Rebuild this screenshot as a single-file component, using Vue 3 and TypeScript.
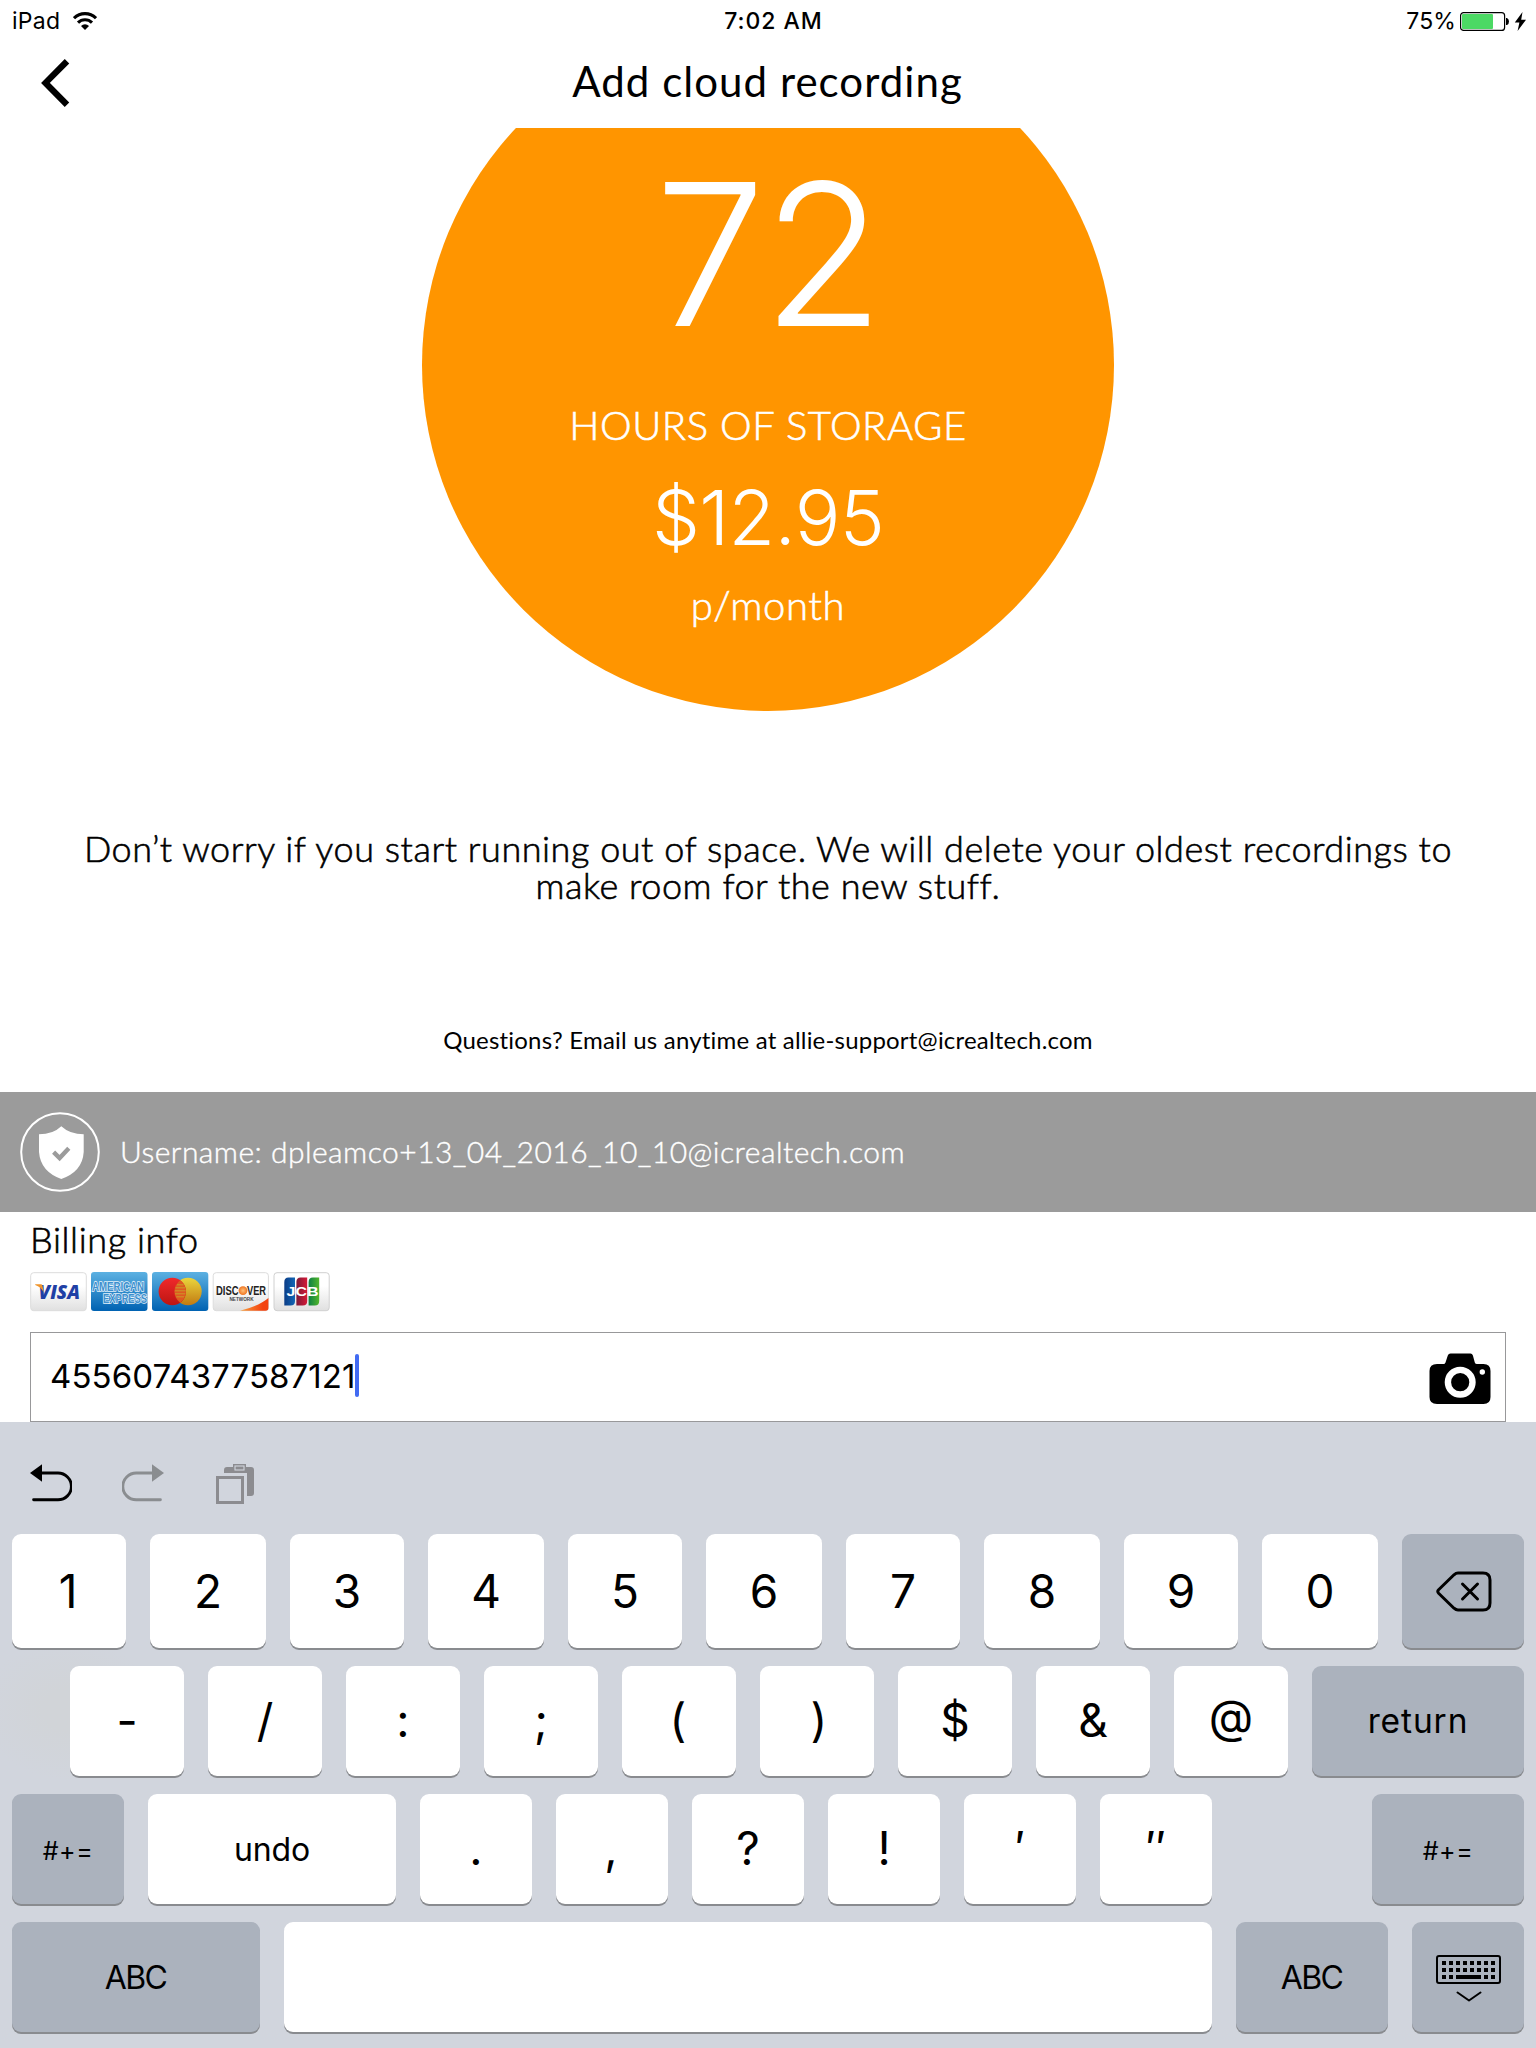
<script setup lang="ts">
interface Key {
  label: string
  kind?: 'dark' | 'space'
  size?: 'word' | 'small'
  icon?: 'delete' | 'dismiss'
  width: number
  nudge?: number
  lift?: number
  gapBefore?: number
}

const k = (label: string, width: number, extra: Partial<Key> = {}): Key => ({ label, width, ...extra })

const rows: { name: string; keys: Key[] }[] = [
  {
    name: 'digits',
    keys: [
      k('1', 114, { nudge: -1 }), k('2', 116), k('3', 114), k('4', 116), k('5', 114),
      k('6', 116), k('7', 114), k('8', 116), k('9', 114), k('0', 116),
      k('', 122, { kind: 'dark', icon: 'delete' }),
    ],
  },
  {
    name: 'symbols',
    keys: [
      k('-', 114), k('/', 114), k(':', 114), k(';', 114), k('(', 114, { nudge: -1 }),
      k(')', 114, { nudge: 2 }), k('$', 114), k('&', 114), k('@', 114, { lift: 4 }),
      k('return', 212, { kind: 'dark', size: 'word' }),
    ],
  },
  {
    name: 'marks',
    keys: [
      k('#+=', 112, { kind: 'dark', size: 'small' }), k('undo', 248, { size: 'word' }),
      k('.', 112), k(',', 112, { nudge: -1 }), k('?', 112), k('!', 112), k('′', 112), k('″', 112),
      k('#+=', 152, { kind: 'dark', size: 'small', gapBefore: 136 }),
    ],
  },
  {
    name: 'bottom',
    keys: [
      k('ABC', 248, { kind: 'dark', size: 'word' }), k('', 928, { kind: 'space' }),
      k('ABC', 152, { kind: 'dark', size: 'word' }), k('', 112, { kind: 'dark', icon: 'dismiss' }),
    ],
  },
]

const labelStyle = (key: Key) => ({
  marginLeft: key.nudge ? key.nudge * 2 + 'px' : undefined,
  marginBottom: key.lift ? key.lift * 2 + 'px' : undefined,
})

const dots: { x: number; y: number }[] = []
for (let r = 0; r < 3; r++) {
  for (let c = 0; c < 8; c++) {
    if (r === 2 && c > 1 && c < 6) continue
    dots.push({ x: 6 + c * 7, y: 6 + r * 7 })
  }
}
</script>

<template>
  <div class="screen">
    <div class="status">
      <div class="side left">
        <span class="device">iPad</span>
        <svg class="wifi" width="24" height="19" viewBox="0 0 24 19">
          <g fill="none" stroke="#000" stroke-width="3.1">
            <path d="M1 6.2 A15.6 15.6 0 0 1 23 6.2" />
            <path d="M5 10.6 A9.9 9.9 0 0 1 19 10.6" />
          </g>
          <path d="M12 18 L8 13.9 A5.8 5.8 0 0 1 16 13.9 Z" />
        </svg>
      </div>
      <div class="time">7:02 AM</div>
      <div class="side right">
        <span class="pct">75%</span>
        <svg width="67" height="19" viewBox="0 0 67 19">
          <rect x="0.6" y="0.6" width="44" height="17.8" rx="3" fill="none" stroke="#000" stroke-width="1.2" />
          <rect x="2" y="2" width="31" height="15" rx="1" fill="#4cd964" />
          <path d="M46 6 h1 q2 1 2 3.5 t-2 3.5 h-1 z" />
          <path d="M62.5 0 L54.8 10.6 H59.4 L57.6 19 L66 7.7 H61.2 Z" />
        </svg>
      </div>
    </div>

    <div class="nav">
      <svg class="back" width="30" height="50" viewBox="0 0 30 50">
        <path d="M27 3.2 L5.5 24.9 L27 46.7" fill="none" stroke="#000" stroke-width="6.3" />
      </svg>
      <div class="title">Add cloud recording</div>
      <div class="nav-end"></div>
    </div>

    <div class="plan">
      <div class="circle">
        <div class="hours">72</div>
        <div class="storage">HOURS OF STORAGE</div>
        <div class="price">$12.95</div>
        <div class="period">p/month</div>
      </div>
    </div>

    <div class="note">
      Don’t worry if you start running out of space. We will delete your oldest recordings to
      make room for the new stuff.
    </div>
    <div class="questions">Questions? Email us anytime at allie-support@icrealtech.com</div>

    <div class="user">
      <svg width="80" height="80" viewBox="0 0 80 80">
        <circle cx="40" cy="40" r="38.8" fill="none" stroke="#fff" stroke-width="2" />
        <path fill="#fff" d="M41.3 14.2 Q50 22.3 63.7 22.3 V40 Q62.5 59.5 41.3 67 Q20.5 59.5 19 40 V22.3 Q33 22.3 41.3 14.2 Z" />
        <path d="M33.6 40.2 L39.6 46 L48.8 36.2" fill="none" stroke="#9b9b9b" stroke-width="4.4" />
      </svg>
      <span>Username: dpleamco+13_04_2016_10_10@icrealtech.com</span>
    </div>

    <div class="billing">
      <div class="billing-title">Billing info</div>
      <svg class="cards" width="301" height="40" viewBox="0 0 301 40">
        <defs>
          <linearGradient id="pale" x1="0" y1="0" x2="0" y2="1">
            <stop offset="0.35" stop-color="#fff" /><stop offset="1" stop-color="#e0e0e0" />
          </linearGradient>
          <linearGradient id="azure" x1="0" y1="0" x2="0" y2="1">
            <stop offset="0" stop-color="#5cb1e2" /><stop offset="1" stop-color="#0062b2" />
          </linearGradient>
          <linearGradient id="red" x1="0" y1="0" x2="0" y2="1">
            <stop offset="0" stop-color="#f0292b" /><stop offset="1" stop-color="#bd1512" />
          </linearGradient>
          <linearGradient id="gold" x1="0" y1="0" x2="0" y2="1">
            <stop offset="0" stop-color="#ead53c" /><stop offset="1" stop-color="#c17a12" />
          </linearGradient>
          <linearGradient id="flame" x1="0" y1="0" x2="1" y2="0">
            <stop offset="0" stop-color="#f8a03c" /><stop offset="0.8" stop-color="#f3420f" />
          </linearGradient>
          <linearGradient id="jblue"><stop offset="0" stop-color="#0b3c86" /><stop offset="1" stop-color="#1266b5" /></linearGradient>
          <linearGradient id="jred"><stop offset="0" stop-color="#7c1a38" /><stop offset="1" stop-color="#d51a37" /></linearGradient>
          <linearGradient id="jgreen"><stop offset="0" stop-color="#0e8044" /><stop offset="1" stop-color="#52b62c" /></linearGradient>
          <radialGradient id="orb"><stop offset="0" stop-color="#ffc07a" /><stop offset="1" stop-color="#ef7420" /></radialGradient>
        </defs>

        <rect x="0.7" y="0.7" width="55.6" height="38" rx="3" fill="url(#pale)" stroke="#dcdcdc" />
        <text x="8.5" y="27" class="visa" textLength="41.5" lengthAdjust="spacingAndGlyphs">VISA</text>
        <path d="M5.2 12.2 H10.8 Q12 12.2 12.4 13.6 L13.8 20.5 Q11 14.8 5.2 12.9 Z" fill="#f0942a" />

        <rect x="61" y="0" width="56.5" height="39" rx="3" fill="url(#azure)" />
        <text x="62" y="18.8" class="amex" textLength="52" lengthAdjust="spacingAndGlyphs">AMERICAN</text>
        <text x="73" y="30.8" class="amex" textLength="44" lengthAdjust="spacingAndGlyphs">EXPRESS</text>

        <rect x="122" y="0" width="56.3" height="39" rx="3" fill="url(#azure)" />
        <circle cx="158" cy="19.5" r="13.7" fill="url(#gold)" />
        <circle cx="142.3" cy="19.5" r="13.7" fill="url(#red)" />
        <path d="M150.2 8.3 A13.7 13.7 0 0 1 150.2 30.7 A13.7 13.7 0 0 1 150.2 8.3 Z" fill="#de5a20" />
        <path d="M147 12.8 H153.5 M145.5 15.8 H155 M144.8 18.8 H155.6 M145 21.8 H155.4 M146.3 24.8 H154.2" stroke="#c9a02a" stroke-width="0.9" />

        <rect x="183.2" y="0.7" width="55.2" height="38" rx="3" fill="url(#pale)" stroke="#dcdcdc" />
        <path d="M210 38.7 Q229 34 238.4 26 V36 Q238.4 38.7 235.5 38.7 Z" fill="url(#flame)" />
        <circle cx="213" cy="18.6" r="4.4" fill="url(#orb)" />
        <text x="186" y="23" class="disc" textLength="22.6" lengthAdjust="spacingAndGlyphs">DISC</text>
        <text x="217" y="23" class="disc" textLength="19" lengthAdjust="spacingAndGlyphs">VER</text>
        <text x="199.5" y="28.6" class="net" textLength="24" lengthAdjust="spacingAndGlyphs">NETWORK</text>

        <rect x="244" y="0.7" width="55.2" height="38" rx="3" fill="url(#pale)" stroke="#d0d0d0" />
        <path d="M258.5 5.5 H265 V29 Q265 33.5 260.5 33.5 H254.3 V10 Q254.3 5.5 258.5 5.5 Z" fill="url(#jblue)" />
        <path d="M270.6 5.5 H277.2 V29 Q277.2 33.5 272.7 33.5 H266.4 V10 Q266.4 5.5 270.6 5.5 Z" fill="url(#jred)" />
        <path d="M282.8 5.5 H289.2 V29 Q289.2 33.5 284.8 33.5 H278.6 V10 Q278.6 5.5 282.8 5.5 Z" fill="url(#jgreen)" />
        <text x="256.5" y="24" class="jcb" textLength="32" lengthAdjust="spacingAndGlyphs">JCB</text>
      </svg>

      <div class="field">
        <span class="number">4556074377587121</span>
        <span class="caret"></span>
        <svg class="camera" width="62" height="52" viewBox="0 0 62 52">
          <path fill-rule="evenodd" d="M8 11 H14.5 Q16 11 16.5 9.5 L18.8 2.6 Q19.5 0.5 21.5 0.5 H41.5 Q43.3 0.5 43.9 2.6 L45.8 9.5 Q46.3 11 48 11 H54.5 Q61.5 11 61.5 18 V44 Q61.5 51 54.5 51 H8 Q0.5 51 0.5 44 V18 Q0.5 11 8 11 Z" />
          <circle cx="31.2" cy="29.2" r="12.3" fill="none" stroke="#fff" stroke-width="6.4" />
          <circle cx="53.3" cy="19" r="2.7" fill="#fff" />
        </svg>
      </div>
    </div>

    <div class="keyboard">
      <div class="tools">
        <svg width="42" height="38" viewBox="0 0 42 38">
          <path d="M10 9 H28 A13.4 13.4 0 0 1 28 35.8 H3.6" fill="none" stroke="#000" stroke-width="2.9" stroke-linecap="round" />
          <path d="M0 9 L12 0.3 V17.8 Z" />
        </svg>
        <svg width="42" height="38" viewBox="0 0 42 38">
          <path d="M32 9 H14.2 A13.4 13.4 0 0 0 14.2 35.8 H38.4" fill="none" stroke="#8a8d90" stroke-width="2.9" stroke-linecap="round" />
          <path d="M42 9 L30 0.3 V17.8 Z" fill="#8a8d90" />
        </svg>
        <svg class="paste" width="38" height="40" viewBox="0 0 38 40">
          <path d="M8 9 V6 Q8 3 11 3 H17 V0 H30 V3 H35 Q38 3 38 6 V29 Q38 32 35 32 H31 V9 Z" fill="#8c8c90" />
          <rect x="19" y="2" width="9" height="4" fill="#8c8c90" stroke="#d1d5dd" stroke-width="1.1" />
          <rect x="1.5" y="13.5" width="25" height="25" fill="none" stroke="#8c8c90" stroke-width="3" />
        </svg>
      </div>

      <div v-for="row in rows" :key="row.name" class="row" :class="row.name">
        <div
          v-for="(key, i) in row.keys"
          :key="i"
          class="key"
          :class="[key.kind, key.size]"
          :style="{ width: key.width + 'px', marginLeft: key.gapBefore ? key.gapBefore + 'px' : undefined }"
        >
          <svg v-if="key.icon === 'delete'" class="delete" width="56" height="42" viewBox="0 0 56 42">
            <path d="M22 2 H47 Q54 2 54 9 V32 Q54 39 47 39 H22 Q20 39 18 37.2 L2.6 22.2 Q1 20.5 2.6 18.8 L18 3.8 Q20 2 22 2 Z" />
            <path d="M26.5 13 L41.5 28 M41.5 13 L26.5 28" />
          </svg>
          <svg v-else-if="key.icon === 'dismiss'" class="dismiss" width="66" height="48" viewBox="0 0 66 48">
            <rect x="1" y="1" width="63" height="27" rx="2" fill="none" stroke="#000" stroke-width="2" />
            <rect v-for="(d, n) in dots" :key="n" :x="d.x" :y="d.y" width="4" height="4" />
            <rect x="20" y="20" width="25" height="4" />
            <path d="M21.5 37.5 L33 45.5 L44.5 37.5" fill="none" stroke="#000" stroke-width="2" stroke-linecap="round" stroke-linejoin="round" />
          </svg>
          <span v-else-if="key.label" :style="labelStyle(key)">{{ key.label }}</span>
        </div>
      </div>
    </div>
  </div>
</template>

<style>
body { margin: 0; background: #fff; }
</style>

<style scoped>
* { box-sizing: border-box; }
svg { display: block; flex: none; }
.screen { width: 1536px; height: 2048px; overflow: hidden; background: #fff; color: #000; font-family: Lato, "Open Sans", sans-serif; display: flex; flex-direction: column; white-space: nowrap; }
.screen > div { flex: none; }

.status { height: 41px; display: flex; align-items: center; justify-content: space-between; padding: 1px 9px 0 12px; font: 400 23px/40px Inter, sans-serif; }
.side { flex: 1; display: flex; align-items: center; }
.right { justify-content: flex-end; }
.device { letter-spacing: 0.28px; margin-right: 13px; }
.time { font-weight: 500; letter-spacing: 0.95px; padding-left: 8px; }
.pct { margin-right: 4px; letter-spacing: 0.1px; }

.nav { height: 87px; display: flex; align-items: flex-start; padding: 0 40px 0 40px; }
.back { margin-top: 17px; }
.title { flex: 1; text-align: center; font-size: 42px; line-height: 80px; letter-spacing: 1.05px; margin-left: -1px; }
.nav-end { width: 30px; }

.plan { height: 583px; overflow: hidden; display: flex; justify-content: center; }
.circle { width: 692px; height: 692px; flex: none; margin-top: -109px; border-radius: 50%; background: #ff9500; color: #fff; display: flex; flex-direction: column; align-items: center; font-weight: 300; }
.hours { font: 300 198px/200px Inter, sans-serif; margin-top: 135px; letter-spacing: -3px; }
.storage { font-size: 40px; line-height: 48px; margin-top: 47px; letter-spacing: 0.55px; -webkit-text-stroke: 0.6px #fff; }
.price { font: 300 76px/90px Inter, sans-serif; margin-top: 23px; letter-spacing: -0.7px; }
.period { font-size: 40px; line-height: 48px; margin-top: 19px; letter-spacing: 0.6px; -webkit-text-stroke: 0.6px #fff; }

.note { margin-top: 119px; height: 74px; text-align: center; font-size: 36px; font-weight: 300; line-height: 37px; white-space: normal; padding: 0 75px; letter-spacing: 0.53px; -webkit-text-stroke: 0.6px #000; }
.questions { margin-top: 121px; height: 67px; text-align: center; font-size: 24px; line-height: 30px; letter-spacing: 0.2px; }

.user { height: 120px; background: #9b9b9b; color: #fff; display: flex; align-items: center; padding-left: 20px; font-weight: 300; font-size: 30px; letter-spacing: 0.47px; -webkit-text-stroke: 0.4px #fff; }
.user span { margin: 0 0 3px 20px; }

.billing { padding: 5px 30px 0; height: 210px; }
.billing-title { font-size: 36px; font-weight: 300; line-height: 45px; height: 44px; letter-spacing: 0.6px; -webkit-text-stroke: 0.6px #000; }
.cards { margin-top: 11px; }
.visa { font: italic 800 19.5px "Open Sans", sans-serif; fill: #1f40a5; }
.amex { font: 700 12.5px "Liberation Sans", sans-serif; fill: #3d8fce; stroke: #e4f1fa; stroke-width: 1.6px; paint-order: stroke; }
.disc { font: 700 12px "Liberation Sans", sans-serif; fill: #222; }
.net { font: 700 4.5px "Liberation Sans", sans-serif; fill: #444; }
.jcb { font: 700 12px "Liberation Sans", sans-serif; fill: #fff; }
.field { margin-top: 20px; height: 90px; border: 1px solid #98989a; display: flex; align-items: center; padding: 0 14px 0 19px; }
.number { font: 400 33px/40px Inter, sans-serif; letter-spacing: 0.07px; margin-bottom: 3px; }
.caret { width: 4px; height: 43px; border-radius: 2px; background: #426bf2; margin: 0 0 3px 0; }
.camera { margin: 4px 0 0 auto; }

.keyboard { height: 626px; background: radial-gradient(ellipse 90px 70px at 70px 288px, #d1d4d8 30%, rgba(209, 212, 216, 0)), #d1d5dd; font-family: Inter, sans-serif; padding: 0 12px; }
.tools { height: 112px; padding: 42px 0 0 18px; display: flex; gap: 50px; }
.paste { margin-left: 2px; }
.row { display: flex; gap: 24px; height: 110px; margin-bottom: 18px; }
.digits { height: 114px; }
.symbols { padding-left: 58px; }
.key { flex: none; border-radius: 9px; background: #fff; box-shadow: 0 2px 0 #898b8f; display: flex; align-items: center; justify-content: center; font-size: 46px; font-weight: 400; line-height: 60px; }
.dark { background: #abb2bd; }
.key span { padding-bottom: 1px; }
.symbols .key span, .marks .key span { padding-bottom: 2px; }
.key.word { font-size: 32px; letter-spacing: -0.2px; }
.key.small { font-size: 25px; letter-spacing: 0.5px; }
.symbols .key.word { font-size: 33.5px; letter-spacing: 0.9px; }
.symbols .key.word span { padding: 0; }
.bottom .key.word { letter-spacing: -1.6px; }
.bottom .key.word span { padding: 1px 1px 0 0; }
.marks .key.word span { padding: 1px 0 0; }
.marks .key.small span { padding: 3px 0 0; }
.delete { fill: none; stroke: #000; stroke-width: 3; stroke-linecap: round; stroke-linejoin: round; margin: 1px 0 0 2px; }
.dismiss { margin: 4px 0 0 2px; }
</style>
